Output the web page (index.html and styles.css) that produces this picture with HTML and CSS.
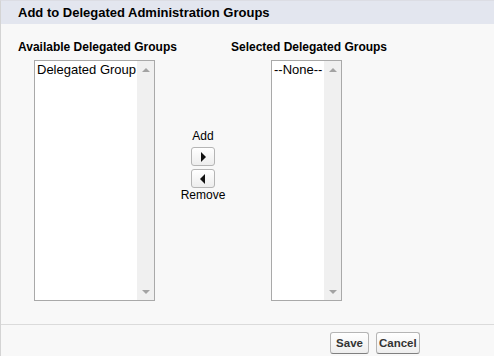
FILE: index.html
```html
<!DOCTYPE html>
<html lang="en">

<head>
    <meta charset="UTF-8">
    <title>Add to Delegated Administration Groups</title>
    <link rel="stylesheet" href="styles.css">
</head>

<body>
    <div class="page-block">
        <div class="block-head">
            <h2>Add to Delegated Administration Groups</h2>
        </div>

        <div class="block-body">
            <div class="labels">
                <div class="label available">Available Delegated Groups</div>
                <div class="label">Selected Delegated Groups</div>
            </div>

            <div class="picker">
                <div class="listbox wide">
                    <div class="options">
                        <div class="option">Delegated Group</div>
                    </div>
                    <div class="scroll">
                        <span class="arrow up"></span>
                        <span class="arrow down"></span>
                    </div>
                </div>

                <div class="controls">
                    <div class="ctl-text add">Add</div>
                    <button class="arrow-btn" title="Add"><span class="tri right"></span></button>
                    <button class="arrow-btn" title="Remove"><span class="tri left"></span></button>
                    <div class="ctl-text">Remove</div>
                </div>

                <div class="listbox narrow">
                    <div class="options">
                        <div class="option">--None--</div>
                    </div>
                    <div class="scroll">
                        <span class="arrow up"></span>
                        <span class="arrow down"></span>
                    </div>
                </div>
            </div>
        </div>

        <div class="block-foot">
            <button class="btn">Save</button>
            <button class="btn">Cancel</button>
        </div>
    </div>
</body>

</html>
```

FILE: styles.css
```css
* {
    box-sizing: border-box;
    font-family: "Liberation Sans", Arial, sans-serif;
}

body {
    margin: 0;
    background-color: #f8f8f8;
}

.page-block {
    width: 494px;
    height: 356px;
    border-left: 1px solid #d4d4d4;
    border-top: 1px solid #dcdde4;
    background-color: #f8f8f8;
}

.block-head {
    height: 23px;
    padding-left: 17px;
    background-color: #e3e6ef;
}

.block-head h2 {
    margin: 0;
    font-size: 13px;
    line-height: 23px;
    font-weight: bold;
    color: #000;
}

.block-body {
    height: 300px;
    padding-top: 16px;
    padding-left: 17px;
}

.labels {
    display: flex;
}

.label {
    font-size: 12px;
    font-weight: bold;
    line-height: 14px;
    color: #000;
}

.label.available {
    width: 213px;
}

.picker {
    display: flex;
    margin-top: 6px;
    margin-left: 16px;
}

.listbox {
    display: flex;
    height: 241px;
    border: 1px solid #a9a9a9;
    background-color: #fff;
}

.listbox.wide {
    width: 121px;
}

.listbox.narrow {
    width: 71px;
}

.options {
    flex: 1;
    padding: 1px 0 0 2px;
}

.option {
    font-size: 13px;
    line-height: 16px;
    color: #000;
    white-space: nowrap;
}

.scroll {
    width: 17px;
    background-color: #f0f0f0;
    display: flex;
    flex-direction: column;
    justify-content: space-between;
    align-items: center;
    padding: 7px 0 6px;
}

.arrow {
    width: 0;
    height: 0;
    border-left: 4px solid transparent;
    border-right: 4px solid transparent;
}

.arrow.up {
    border-bottom: 4px solid #a3a3a3;
}

.arrow.down {
    border-top: 4px solid #a3a3a3;
}

.controls {
    width: 116px;
    padding-top: 69px;
    padding-right: 20px;
    display: flex;
    flex-direction: column;
    align-items: center;
}

.ctl-text {
    font-size: 12px;
    line-height: 14px;
    color: #000;
}

.ctl-text.add {
    margin-bottom: 4px;
}

.arrow-btn {
    width: 24px;
    height: 19px;
    margin-bottom: 3px;
    padding: 0;
    border: 1px solid #b5b5b5;
    border-radius: 3px;
    background: linear-gradient(#ffffff, #ededed);
    display: flex;
    align-items: center;
    justify-content: center;
}

.arrow-btn + .arrow-btn {
    margin-bottom: 0;
}

.tri {
    width: 0;
    height: 0;
    border-top: 5px solid transparent;
    border-bottom: 5px solid transparent;
}

.tri.right {
    border-left: 5px solid #111;
    margin-left: 1px;
}

.tri.left {
    border-right: 5px solid #111;
    margin-right: 1px;
}

.block-foot {
    border-top: 1px solid #dbdbdb;
    padding-top: 7px;
    padding-left: 329px;
    display: flex;
    gap: 7px;
}

.btn {
    height: 22px;
    min-width: 39px;
    padding: 0 2px;
    font-size: 11.5px;
    font-weight: bold;
    color: #333;
    border: 1px solid #b5b5b5;
    border-bottom-color: #7f7f7f;
    border-radius: 3px;
    background: linear-gradient(#ffffff, #eeeeee);
    cursor: pointer;
}
```
